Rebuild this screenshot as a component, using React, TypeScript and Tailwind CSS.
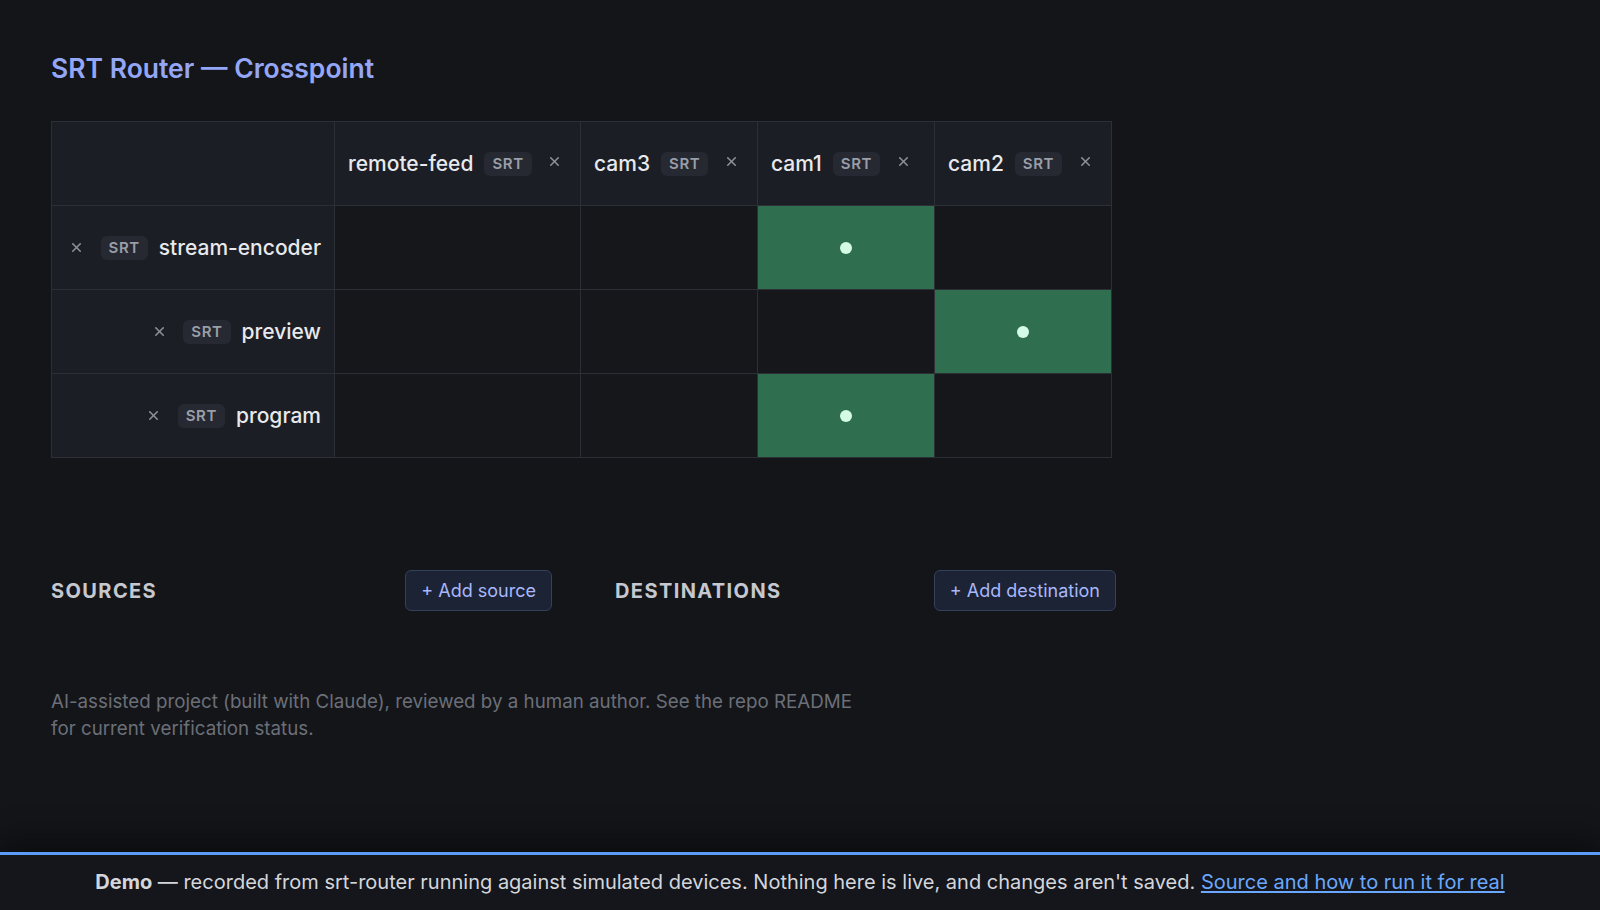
import { X } from 'lucide-react';

const SOURCES = ['remote-feed', 'cam3', 'cam1', 'cam2'];
const DESTS = [
  { name: 'stream-encoder', route: 'cam1' },
  { name: 'preview', route: 'cam2' },
  { name: 'program', route: 'cam1' },
];

const Badge = () => (
  <span className="rounded-md bg-[#262932] px-2 py-[3px] text-[15px] font-semibold leading-[18px] tracking-[0.04em] text-[#9a9ea8]">
    SRT
  </span>
);

const Remove = () => (
  <button className="flex h-4 w-4 items-center justify-center text-[#8b8f98]">
    <X size={15} strokeWidth={2.5} />
  </button>
);

export default function App() {
  return (
    <div className="flex min-h-[910px] flex-col bg-[#141519] font-['Inter','Liberation_Sans',sans-serif] text-[#e8e9ec]">
      <main className="flex-1 px-[51px] pt-[50px]">
        <h1 className="text-[26.5px] font-semibold leading-[36px] text-[#94a7f7]">SRT Router — Crosspoint</h1>

        <div className="mt-[35px] inline-grid grid-cols-[282px_245px_176px_176px_176px] gap-px border border-[#2c2f36] bg-[#2c2f36]">
          <div className="h-[83px] bg-[#1c1e25]" />
          {SOURCES.map((s) => (
            <div key={s} className="flex h-[83px] items-center gap-[11px] bg-[#1c1e25] pl-[13px]">
              <span className="text-[21px] font-medium">{s}</span>
              <Badge />
              <span className="ml-[4px] -mt-1">
                <Remove />
              </span>
            </div>
          ))}

          {DESTS.map((d) => (
            <div key={d.name} className="contents">
              <div className="flex h-[83px] items-center justify-end gap-[11px] bg-[#1c1e25] pr-[13px]">
                <span className="mr-[5px]">
                  <Remove />
                </span>
                <Badge />
                <span className="text-[21px] font-medium">{d.name}</span>
              </div>
              {SOURCES.map((s) => (
                <div
                  key={s}
                  className={
                    d.route === s
                      ? 'flex h-[83px] items-center justify-center bg-[#2f6e4f]'
                      : 'h-[83px] bg-[#16171b]'
                  }
                >
                  {d.route === s && <span className="h-3 w-3 rounded-full bg-[#d4fbe6]" />}
                </div>
              ))}
            </div>
          ))}
        </div>

        <div className="mt-[112px] grid grid-cols-[501px_501px] gap-[63px]">
          <div className="flex items-center justify-between">
            <h2 className="text-[20px] font-bold tracking-[0.07em] text-[#c5c8cf]">SOURCES</h2>
            <button className="h-[41px] rounded-md border border-[#34405c] bg-[#1c2335] px-[15px] text-[18px] text-[#a8b8fb]">
              + Add source
            </button>
          </div>
          <div className="flex items-center justify-between">
            <h2 className="text-[20px] font-bold tracking-[0.07em] text-[#c5c8cf]">DESTINATIONS</h2>
            <button className="h-[41px] rounded-md border border-[#34405c] bg-[#1c2335] px-[15px] text-[18px] text-[#a8b8fb]">
              + Add destination
            </button>
          </div>
        </div>

        <p className="mt-[77px] max-w-[820px] text-[18.75px] leading-[27px] text-[#6b6f78]">
          AI-assisted project (built with Claude), reviewed by a human author. See the repo README for current
          verification status.
        </p>
      </main>

      <footer className="border-t-[3px] border-[#5b9cf7] bg-[#15161b] py-[14px] text-center text-[20px] leading-[27px] text-[#d4d6dc] shadow-[0_-16px_28px_rgba(0,0,0,0.35)]">
        <strong className="font-bold">Demo</strong> — recorded from srt-router running against simulated devices.
        Nothing here is live, and changes aren't saved.{' '}
        <a href="#" className="text-[#6aa8ff] underline underline-offset-2">
          Source and how to run it for real
        </a>
      </footer>
    </div>
  );
}
